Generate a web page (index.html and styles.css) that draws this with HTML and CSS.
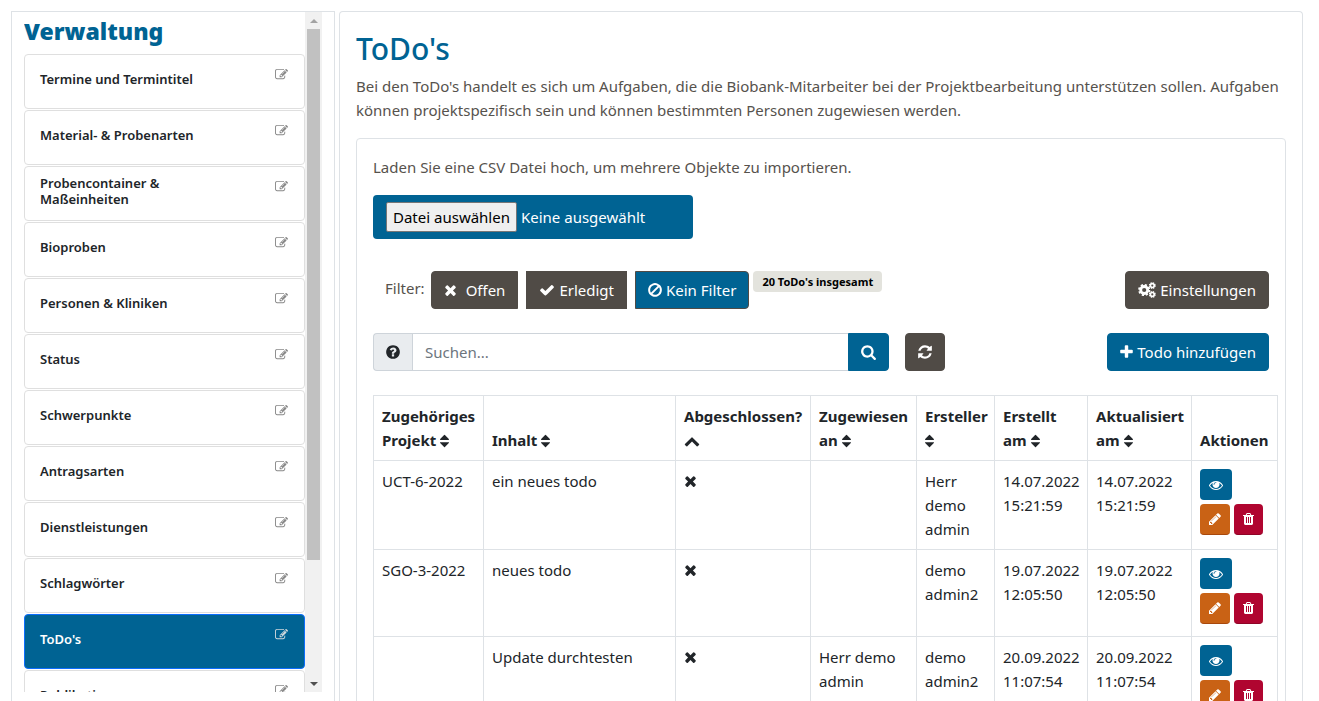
FILE: index.html
```html
<!DOCTYPE html>
<html lang="de">
<head>
<meta charset="utf-8">
<title>ToDo's – Verwaltung</title>
<link rel="stylesheet" href="styles.css">
</head>
<body>
<svg class="sprite" aria-hidden="true">
  <symbol id="edit" viewBox="0 0 1792 1792"><path d="M888 1184l116-116-152-152-116 116v56h96v96h56zm440-720q-16-16-33 1l-350 350q-17 17-1 33t33-1l350-350q17-17 1-33zm80 594v190q0 119-84.500 203.500t-203.500 84.500h-832q-119 0-203.500-84.500t-84.500-203.500v-832q0-119 84.500-203.500t203.500-84.500h832q63 0 117 25 15 7 18 23 3 17-9 29l-49 49q-14 14-32 8-23-6-45-6h-832q-66 0-113 47t-47 113v832q0 66 47 113t113 47h832q66 0 113-47t47-113v-126q0-13 9-22l64-64q15-15 35-7t20 29zm-96-738l288 288-672 672h-288v-288zm444 132l-92 92-288-288 92-92q28-28 68-28t68 28l152 152q28 28 28 68t-28 68z"/></symbol>
  <symbol id="times" viewBox="192 0 1408 1792"><path d="M1490 1322q0 40-28 68l-136 136q-28 28-68 28t-68-28l-294-294-294 294q-28 28-68 28t-68-28l-136-136q-28-28-28-68t28-68l294-294-294-294q-28-28-28-68t28-68l136-136q28-28 68-28t68 28l294 294 294-294q28-28 68-28t68 28l136 136q28 28 28 68t-28 68l-294 294 294 294q28 28 28 68z"/></symbol>
  <symbol id="check" viewBox="0 0 1792 1792"><path d="M1671 566q0 40-28 68l-724 724-136 136q-28 28-68 28t-68-28l-136-136-362-362q-28-28-28-68t28-68l136-136q28-28 68-28t68 28l294 295 656-657q28-28 68-28t68 28l136 136q28 28 28 68z"/></symbol>
  <symbol id="ban" viewBox="128 0 1536 1792"><path d="M1440 893q0-161-87-295l-754 753q137 89 297 89 111 0 211.500-43.500t173.500-116.500 116-174.500 43-212.500zm-999 299l755-754q-135-91-300-91-148 0-273 73t-198 199-73 274q0 162 89 299zm1223-299q0 157-61 300t-163.500 246-245 164-298.500 61-298.500-61-245-164-163.500-246-61-300 61-299.500 163.500-245.500 245-164 298.500-61 298.500 61 245 164 163.500 245.500 61 299.500z"/></symbol>
  <symbol id="question" viewBox="128 0 1536 1792"><path d="M1024 1376v-192q0-14-9-23t-23-9h-192q-14 0-23 9t-9 23v192q0 14 9 23t23 9h192q14 0 23-9t9-23zm256-672q0-88-55.500-163t-138.500-116-170-41q-243 0-371 213-15 24 8 42l132 100q7 6 19 6 16 0 25-12 53-68 86-92 34-24 86-24 48 0 85.500 26t37.500 59q0 38-20 61t-68 45q-63 28-115.500 86.500t-52.500 125.500v36q0 14 9 23t23 9h192q14 0 23-9t9-23q0-19 21.500-49.500t54.500-49.500q32-18 49-28.500t46-35 44.500-48 28-60.500 12.500-81zm384 192q0 209-103 385.500t-279.500 279.500-385.500 103-385.500-103-279.500-279.500-103-385.500 103-385.500 279.500-279.500 385.500-103 385.500 103 279.500 279.500 103 385.500z"/></symbol>
  <symbol id="search" viewBox="64 0 1664 1792"><path d="M1216 832q0-185-131.500-316.500t-316.500-131.500-316.500 131.500-131.500 316.500 131.500 316.500 316.500 131.500 316.500-131.500 131.500-316.500zm512 832q0 52-38 90t-90 38q-54 0-90-38l-343-342q-179 124-399 124-143 0-273.500-55.500t-225-150-150-225-55.500-273.500 55.500-273.500 150-225 225-150 273.500-55.500 273.500 55.500 225 150 150 225 55.500 273.500q0 220-124 399l343 343q37 37 37 90z"/></symbol>
  <symbol id="refresh" viewBox="128 0 1536 1792"><path d="M1639 1056q0 5-1 7-64 268-268 434.500t-478 166.500q-146 0-282.500-55t-243.500-157l-129 129q-19 19-45 19t-45-19-19-45v-448q0-26 19-45t45-19h448q26 0 45 19t19 45-19 45l-137 137q71 66 161 102t187 36q134 0 250-65t186-179q11-17 53-117 8-23 30-23h192q13 0 22.500 9.500t9.500 22.500zm25-800v448q0 26-19 45t-45 19h-448q-26 0-45-19t-19-45 19-45l138-138q-148-137-349-137-134 0-250 65t-186 179q-11 17-53 117-8 23-30 23h-199q-13 0-22.500-9.500t-9.500-22.500v-7q65-268 270-434.500t480-166.500q146 0 284 55.500t245 156.500l130-129q19-19 45-19t45 19 19 45z"/></symbol>
  <symbol id="plus" viewBox="192 0 1408 1792"><path d="M1600 736v192q0 40-28 68t-68 28h-416v416q0 40-28 68t-68 28h-192q-40 0-68-28t-28-68v-416h-416q-40 0-68-28t-28-68v-192q0-40 28-68t68-28h416v-416q0-40 28-68t68-28h192q40 0 68 28t28 68v416h416q40 0 68 28t28 68z"/></symbol>
  <symbol id="sort" viewBox="384 0 1024 1792"><path d="M1408 1088q0 26-19 45l-448 448q-19 19-45 19t-45-19l-448-448q-19-19-19-45t19-45 45-19h896q26 0 45 19t19 45zm0-384q0 26-19 45t-45 19h-896q-26 0-45-19t-19-45 19-45l448-448q19-19 45-19t45 19l448 448q19 19 19 45z"/></symbol>
  <symbol id="up" viewBox="0 0 1792 1792"><path d="M1683 1331l-166 165q-19 19-45 19t-45-19l-531-531-531 531q-19 19-45 19t-45-19l-166-165q-19-19-19-45.500t19-45.500l742-741q19-19 45-19t45 19l742 741q19 19 19 45.500t-19 45.500z"/></symbol>
  <symbol id="eye" viewBox="0 0 1792 1792"><path d="M1664 960q-152-236-381-353 61 104 61 225 0 185-131.500 316.500t-316.500 131.500-316.500-131.500-131.500-316.500q0-121 61-225-229 117-381 353 133 205 333.500 326.500t434.500 121.500 434.500-121.500 333.500-326.500zm-720-384q0-20-14-34t-34-14q-125 0-214.500 89.500t-89.500 214.500q0 20 14 34t34 14 34-14 14-34q0-86 61-147t147-61q20 0 34-14t14-34zm848 384q0 34-20 69-140 230-376.500 368.500t-499.500 138.500-499.500-139-376.500-368q-20-35-20-69t20-69q140-229 376.500-368t499.500-139 499.500 139 376.500 368q20 35 20 69z"/></symbol>
  <symbol id="pencil" viewBox="128 0 1536 1792"><path d="M491 1536l91-91-235-235-91 91v107h128v128h107zm523-928q0-22-22-22-10 0-17 7l-542 542q-7 7-7 17 0 22 22 22 10 0 17-7l542-542q7-7 7-17zm-54-192l416 416-832 832h-416v-416zm683 96q0 53-37 90l-166 166-416-416 166-165q36-38 90-38 53 0 91 38l235 234q37 39 37 91z"/></symbol>
  <symbol id="trash" viewBox="192 0 1408 1792"><path d="M704 1376v-704q0-14-9-23t-23-9h-64q-14 0-23 9t-9 23v704q0 14 9 23t23 9h64q14 0 23-9t9-23zm256 0v-704q0-14-9-23t-23-9h-64q-14 0-23 9t-9 23v704q0 14 9 23t23 9h64q14 0 23-9t9-23zm256 0v-704q0-14-9-23t-23-9h-64q-14 0-23 9t-9 23v704q0 14 9 23t23 9h64q14 0 23-9t9-23zm-544-992h448l-48-117q-7-9-17-11h-317q-10 2-17 11zm928 32v64q0 14-9 23t-23 9h-96v948q0 83-47 143.500t-113 60.500h-832q-66 0-113-58.500t-47-141.500v-952h-96q-14 0-23-9t-9-23v-64q0-14 9-23t23-9h309l70-167q15-37 54-63t79-26h320q40 0 79 26t54 63l70 167h309q14 0 23 9t9 23z"/></symbol>
  <symbol id="cogs" viewBox="0 0 18 16"><g fill="none" stroke="currentColor"><circle cx="6.200" cy="8" r="3.500" stroke-width="2.800"/><circle cx="6.200" cy="8" r="5.200" stroke-width="1.800" stroke-dasharray="2.240 1.840"/><circle cx="14.300" cy="3.600" r="1.900" stroke-width="1.700"/><circle cx="14.300" cy="3.600" r="2.900" stroke-width="1.100" stroke-dasharray="1.300 1"/><circle cx="14.300" cy="12.400" r="1.900" stroke-width="1.700"/><circle cx="14.300" cy="12.400" r="2.900" stroke-width="1.100" stroke-dasharray="1.300 1"/></g></symbol>
</svg>
<div class="page">
  <aside class="sidebar">
    <nav class="sidebar-list" aria-label="Verwaltung">
      <h2 class="sidebar-title">Verwaltung</h2>
      <a class="nav-item" href="#"><span class="nav-label">Termine und Termintitel</span><svg class="nav-icon"><use href="#edit"/></svg></a>
      <a class="nav-item" href="#"><span class="nav-label">Material- &amp; Probenarten</span><svg class="nav-icon"><use href="#edit"/></svg></a>
      <a class="nav-item" href="#"><span class="nav-label">Probencontainer &amp; Maßeinheiten</span><svg class="nav-icon"><use href="#edit"/></svg></a>
      <a class="nav-item" href="#"><span class="nav-label">Bioproben</span><svg class="nav-icon"><use href="#edit"/></svg></a>
      <a class="nav-item" href="#"><span class="nav-label">Personen &amp; Kliniken</span><svg class="nav-icon"><use href="#edit"/></svg></a>
      <a class="nav-item" href="#"><span class="nav-label">Status</span><svg class="nav-icon"><use href="#edit"/></svg></a>
      <a class="nav-item" href="#"><span class="nav-label">Schwerpunkte</span><svg class="nav-icon"><use href="#edit"/></svg></a>
      <a class="nav-item" href="#"><span class="nav-label">Antragsarten</span><svg class="nav-icon"><use href="#edit"/></svg></a>
      <a class="nav-item" href="#"><span class="nav-label">Dienstleistungen</span><svg class="nav-icon"><use href="#edit"/></svg></a>
      <a class="nav-item" href="#"><span class="nav-label">Schlagwörter</span><svg class="nav-icon"><use href="#edit"/></svg></a>
      <a class="nav-item nav-item-active" href="#" aria-current="page"><span class="nav-label">ToDo's</span><svg class="nav-icon"><use href="#edit"/></svg></a>
      <a class="nav-item" href="#"><span class="nav-label">Publikationen</span><svg class="nav-icon"><use href="#edit"/></svg></a>
    </nav>
    <div class="scrollbar" aria-hidden="true">
      <span class="scroll-arrow scroll-arrow-up"></span>
      <span class="scroll-thumb"></span>
      <span class="scroll-rest"></span>
      <span class="scroll-arrow scroll-arrow-down"></span>
    </div>
  </aside>

  <main class="content">
    <h1 class="content-title">ToDo's</h1>
    <p class="intro">Bei den ToDo's handelt es sich um Aufgaben, die die Biobank-Mitarbeiter bei der Projektbearbeitung unterstützen sollen. Aufgaben können projektspezifisch sein und können bestimmten Personen zugewiesen werden.</p>

    <section class="card">
      <p class="upload-hint">Laden Sie eine CSV Datei hoch, um mehrere Objekte zu importieren.</p>
      <label class="upload"><input class="upload-input" type="file" accept=".csv"><span class="upload-button">Datei auswählen</span><span>Keine ausgewählt</span></label>

      <div class="filters">
        <span class="filter-label">Filter:</span>
        <div class="filter-buttons">
          <button class="btn btn-dark btn-first" type="button"><svg class="icon icon-narrow icon-spaced"><use href="#times"/></svg>Offen</button>
          <button class="btn btn-dark btn-middle" type="button"><svg class="icon icon-wide"><use href="#check"/></svg>Erledigt</button>
          <button class="btn btn-blue btn-last" type="button"><svg class="icon"><use href="#ban"/></svg>Kein Filter</button>
        </div>
        <span class="badge">20 ToDo's insgesamt</span>
        <button class="btn btn-dark push" type="button"><svg class="icon icon-cogs"><use href="#cogs"/></svg>Einstellungen</button>
      </div>

      <div class="tools">
        <form class="search">
          <span class="search-help"><svg class="icon"><use href="#question"/></svg></span>
          <input class="search-input" type="text" placeholder="Suchen..." aria-label="Suchen">
          <button class="btn btn-blue search-button" type="button" aria-label="Suche starten"><svg class="icon icon-search"><use href="#search"/></svg></button>
        </form>
        <button class="btn btn-dark" type="button" aria-label="Aktualisieren"><svg class="icon"><use href="#refresh"/></svg></button>
        <button class="btn btn-blue push" type="button"><svg class="icon icon-narrow"><use href="#plus"/></svg>Todo hinzufügen</button>
      </div>

      <table class="todos">
        <colgroup><col class="col-project"><col><col class="col-done"><col class="col-assigned"><col class="col-creator"><col class="col-created"><col class="col-updated"><col class="col-actions"></colgroup>
        <thead>
          <tr>
            <th scope="col">Zugehöriges Projekt&nbsp;<svg class="sort"><use href="#sort"/></svg></th>
            <th scope="col">Inhalt <svg class="sort"><use href="#sort"/></svg></th>
            <th scope="col">Abgeschlossen? <svg class="mark"><use href="#up"/></svg></th>
            <th scope="col">Zugewiesen an <svg class="sort"><use href="#sort"/></svg></th>
            <th scope="col">Ersteller <svg class="sort"><use href="#sort"/></svg></th>
            <th scope="col">Erstellt am&nbsp;<svg class="sort"><use href="#sort"/></svg></th>
            <th scope="col">Aktualisiert am&nbsp;<svg class="sort"><use href="#sort"/></svg></th>
            <th scope="col">Aktionen</th>
          </tr>
        </thead>
        <tbody>
          <tr>
            <td>UCT-6-2022</td><td>ein neues todo</td><td><svg class="cross"><use href="#times"/></svg></td><td></td><td>Herr demo admin</td><td>14.07.2022 15:21:59</td><td>14.07.2022 15:21:59</td>
            <td><div class="actions"><button class="action action-view" type="button" aria-label="Ansehen"><svg><use href="#eye"/></svg></button><button class="action action-edit" type="button" aria-label="Bearbeiten"><svg><use href="#pencil"/></svg></button><button class="action action-delete" type="button" aria-label="Löschen"><svg><use href="#trash"/></svg></button></div></td>
          </tr>
          <tr>
            <td>SGO-3-2022</td><td>neues todo</td><td><svg class="cross"><use href="#times"/></svg></td><td></td><td>demo admin2</td><td>19.07.2022 12:05:50</td><td>19.07.2022 12:05:50</td>
            <td><div class="actions"><button class="action action-view" type="button" aria-label="Ansehen"><svg><use href="#eye"/></svg></button><button class="action action-edit" type="button" aria-label="Bearbeiten"><svg><use href="#pencil"/></svg></button><button class="action action-delete" type="button" aria-label="Löschen"><svg><use href="#trash"/></svg></button></div></td>
          </tr>
          <tr>
            <td></td><td>Update durchtesten</td><td><svg class="cross"><use href="#times"/></svg></td><td>Herr demo admin</td><td>demo admin2</td><td>20.09.2022 11:07:54</td><td>20.09.2022 11:07:54</td>
            <td><div class="actions"><button class="action action-view" type="button" aria-label="Ansehen"><svg><use href="#eye"/></svg></button><button class="action action-edit" type="button" aria-label="Bearbeiten"><svg><use href="#pencil"/></svg></button><button class="action action-delete" type="button" aria-label="Löschen"><svg><use href="#trash"/></svg></button></div></td>
          </tr>
        </tbody>
      </table>
    </section>
  </main>
</div>
</body>
</html>
```
FILE: styles.css
```css
* { box-sizing: border-box; }

body {
  margin: 0;
  background: #fff;
  color: #212529;
  font-family: "Noto Sans", "Open Sans", sans-serif;
  font-size: 15px;
  line-height: 24px;
}

h1, h2, p { margin: 0; }
svg { fill: currentColor; }
button, input { font: inherit; }
.sprite { display: none; }

.page {
  display: flex;
  gap: 4px;
  height: 100vh;
  padding: 11px 16px 0 11px;
  overflow: hidden;
}

/* Sidebar */
.sidebar {
  display: flex;
  flex: 0 0 324px;
  align-items: flex-start;
  padding-left: 12px;
  border: 1px solid #dee2e6;
  border-bottom: 0;
}
.sidebar-list {
  width: 281px;
  height: calc(100vh - 21px);
  overflow: hidden;
}
.sidebar-title {
  margin-bottom: 4px;
  color: #006393;
  font-size: 23px;
  font-weight: 900;
  line-height: 38px;
}
.nav-item {
  display: flex;
  justify-content: space-between;
  height: 55px;
  margin-bottom: 1px;
  padding: 0 16px 6px 15px;
  border: 1px solid #dfdfdf;
  border-radius: 4px;
  color: #212529;
  font-size: 13px;
  font-weight: 600;
  line-height: 16px;
  text-decoration: none;
}
.nav-label { align-self: center; max-width: 184px; }
.nav-icon { width: 13px; height: 13px; margin-top: 13px; color: #888; }
.nav-item-active { background: #006393; border-color: #0d6efd; color: #fff; }
.nav-item-active .nav-icon { color: #d0d8dc; }

.scrollbar {
  display: flex;
  flex-direction: column;
  align-items: center;
  width: 17px;
  height: calc(100vh - 21px);
  background: #f1f1f1;
}
.scroll-arrow { display: flex; align-items: center; justify-content: center; height: 17px; }
.scroll-arrow::before { content: ""; border: 4px solid transparent; }
.scroll-arrow-up::before { border-top: 0; border-bottom-color: #a3a3a3; }
.scroll-arrow-down::before { border-bottom: 0; border-top-color: #505050; }
.scroll-thumb { flex: 531; width: 13px; background: #c1c1c1; }
.scroll-rest { flex: 115; }

/* Main panel */
.content {
  flex: 1;
  min-width: 0;
  padding: 18px 16px 16px;
  border: 1px solid #dee2e6;
  border-bottom: 0;
  border-radius: 4px 4px 0 0;
}
.content-title {
  margin-bottom: 6px;
  color: #006393;
  font-size: 30px;
  font-weight: 500;
  line-height: 38px;
}
.intro, .upload-hint, .filter-label { color: #56524d; }
.intro { margin-bottom: 16px; }

.card {
  padding: 16px;
  border: 1px solid #dee2e6;
  border-radius: 4px;
}
.upload-hint { margin-bottom: 16px; }
.upload {
  display: flex;
  align-items: center;
  gap: 4px;
  width: 320px;
  height: 44px;
  padding: 0 13px;
  border-radius: 4px;
  background: #006393;
  color: #fff;
}
.upload-input { position: absolute; width: 1px; height: 1px; opacity: 0; }
.upload-button {
  padding: 2px 6px;
  border: 1px solid #767676;
  border-radius: 2px;
  background: #efefef;
  color: #000;
}

.btn {
  display: flex;
  align-items: center;
  justify-content: center;
  gap: 4px;
  height: 38px;
  padding: 0 12px;
  border: 1px solid #504b46;
  border-radius: 4px;
  color: #fff;
  white-space: nowrap;
}
.btn-dark { background: #504b46; }
.btn-blue { background: #006393; border-color: #006393; }
.btn-first { border-radius: 4px 0 0 4px; }
.btn-middle { border-radius: 0; }
.btn-last { border-radius: 0 4px 4px 0; border-color: #504b46; }
.icon { width: 14px; height: 16px; }
.icon-narrow { width: 13px; }
.icon-search { width: 15px; }
.icon-wide { width: 16px; }
.icon-cogs { width: 18px; }
.icon-spaced { margin-right: 5px; }
.push { margin-left: auto; }

.filters {
  display: flex;
  align-items: flex-start;
  margin-top: 32px;
  padding-left: 12px;
}
.filter-label { margin: 5px 6px 0 0; }
.filter-buttons { display: flex; gap: 8px; }
.badge {
  margin-left: 4px;
  padding: 0 9px;
  border-radius: 4px;
  background: #e3e3dd;
  color: #000;
  font-size: 11px;
  font-weight: 700;
  line-height: 21px;
}

.tools {
  display: flex;
  gap: 16px;
  margin: 24px 0;
}
.search { display: flex; flex: 0 1 516px; }
.search-help {
  display: flex;
  align-items: center;
  padding: 0 12px;
  border: 1px solid #ced4da;
  border-right: 0;
  border-radius: 4px 0 0 4px;
  background: #e9ecef;
}
.search-input {
  flex: 1;
  min-width: 0;
  padding: 0 12px;
  border: 1px solid #ced4da;
  border-right: 0;
}
.search-input::placeholder { color: #6c757d; opacity: 1; }
.search-button { border-radius: 0 4px 4px 0; }

/* The table reaches slightly into the card's right padding */
.todos {
  width: calc(100% + 9px);
  border-collapse: collapse;
  table-layout: fixed;
}
.todos th, .todos td {
  padding: 8px;
  border: 1px solid #dee2e6;
  text-align: left;
}
.todos th { font-weight: 700; vertical-align: bottom; }
.todos td { vertical-align: top; }
.col-project { width: 110px; }
.col-done { width: 135px; }
.col-assigned { width: 106px; }
.col-creator { width: 78px; }
.col-created { width: 93px; }
.col-updated { width: 104px; }
.col-actions { width: 86px; }
.sort { width: 9px; height: 16px; vertical-align: -3px; }
.mark { width: 16px; height: 16px; vertical-align: -3px; }
.cross { display: block; width: 13px; height: 16px; margin-top: 4px; }

.actions { display: flex; flex-wrap: wrap; gap: 4px; padding-bottom: 4px; }
.action {
  display: flex;
  align-items: center;
  justify-content: center;
  height: 31px;
  padding: 0 9px;
  border: 0;
  border-radius: 4px;
  color: #fff;
}
.action svg { width: 14px; height: 14px; }
.action-view { margin-right: 32px; background: #006393; }
.action-edit { background: #c96215; border-bottom: 1px solid #a8480c; }
.action-delete { background: #b00530; border-bottom: 1px solid #8f0427; }
.action-edit svg { width: 12px; }
.action-delete svg { width: 11px; }
```
